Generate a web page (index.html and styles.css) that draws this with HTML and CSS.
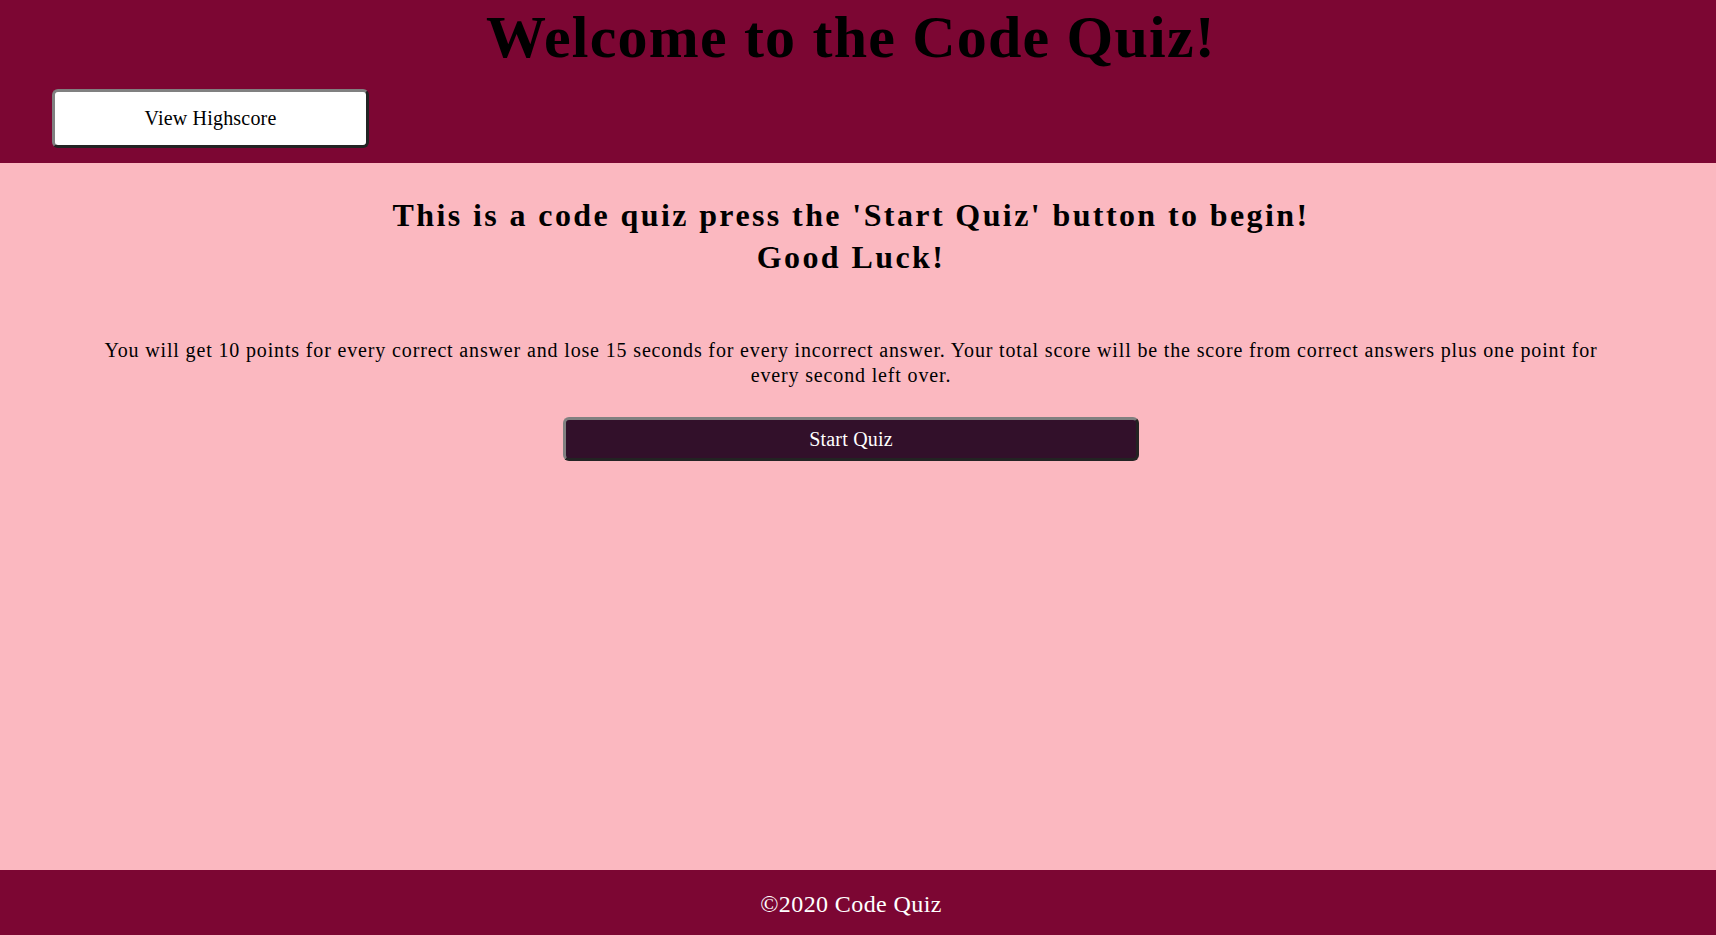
FILE: index.html
```html
<!DOCTYPE html>
<html lang="en">
<head>
<meta charset="utf-8">
<title>Code Quiz</title>
<link rel="stylesheet" href="styles.css">
</head>
<body>
<div class="page">
  <header class="top">
    <h1 class="title">Welcome to the Code Quiz!</h1>
    <button class="btn-highscore">View Highscore</button>
  </header>
  <main class="main">
    <h2 class="intro">This is a code quiz press the 'Start Quiz' button to begin!<br>Good Luck!</h2>
    <p class="rules">You will get 10 points for every correct answer and lose 15 seconds for every incorrect answer. Your total score will be the score from correct answers plus one point for every second left over.</p>
    <button class="btn-start">Start Quiz</button>
  </main>
  <footer class="foot">©2020 Code Quiz</footer>
</div>
</body>
</html>
```
FILE: styles.css
```css
html, body {
  margin: 0;
  padding: 0;
}
body {
  font-family: "Liberation Serif", "Times New Roman", serif;
  color: #000;
}
.page {
  display: flex;
  flex-direction: column;
  min-height: 100vh;
}
.top {
  background: #7c0633;
  padding: 2px 14px 15px 0;
  display: flex;
  flex-direction: column;
  align-items: flex-start;
}
.title {
  align-self: stretch;
  margin: 0;
  text-align: center;
  font-size: 60px;
  line-height: 70px;
  font-weight: bold;
  letter-spacing: 1.2px;
}
.btn-highscore {
  margin: 17px 0 0 52px;
  width: 317px;
  height: 59px;
  background: #fff;
  border: 3px solid;
  border-color: #808080 #232323 #232323 #808080;
  border-radius: 6px;
  font-family: inherit;
  font-size: 20px;
  letter-spacing: 0.2px;
  color: #000;
}
.main {
  flex: 1;
  background: #fbb8c0;
  display: flex;
  flex-direction: column;
  align-items: center;
  padding: 31px 112px 0 98px;
}
.intro {
  margin: 0;
  text-align: center;
  font-size: 32px;
  line-height: 42px;
  font-weight: bold;
  letter-spacing: 2.4px;
}
.rules {
  margin: 60px 0 0;
  text-align: center;
  font-size: 20px;
  line-height: 25px;
  letter-spacing: 0.85px;
}
.btn-start {
  margin-top: 29px;
  width: 576px;
  height: 44px;
  background: #32102a;
  color: #fff;
  border: 3px solid;
  border-color: #808080 #232323 #232323 #808080;
  border-radius: 6px;
  font-family: inherit;
  font-size: 20px;
  letter-spacing: 0.2px;
}
.foot {
  background: #7c0633;
  color: #fff;
  height: 65px;
  line-height: 65px;
  text-align: center;
  font-size: 24px;
  letter-spacing: 0.4px;
  padding: 2px 14px 0 0;
  box-sizing: border-box;
}
```
